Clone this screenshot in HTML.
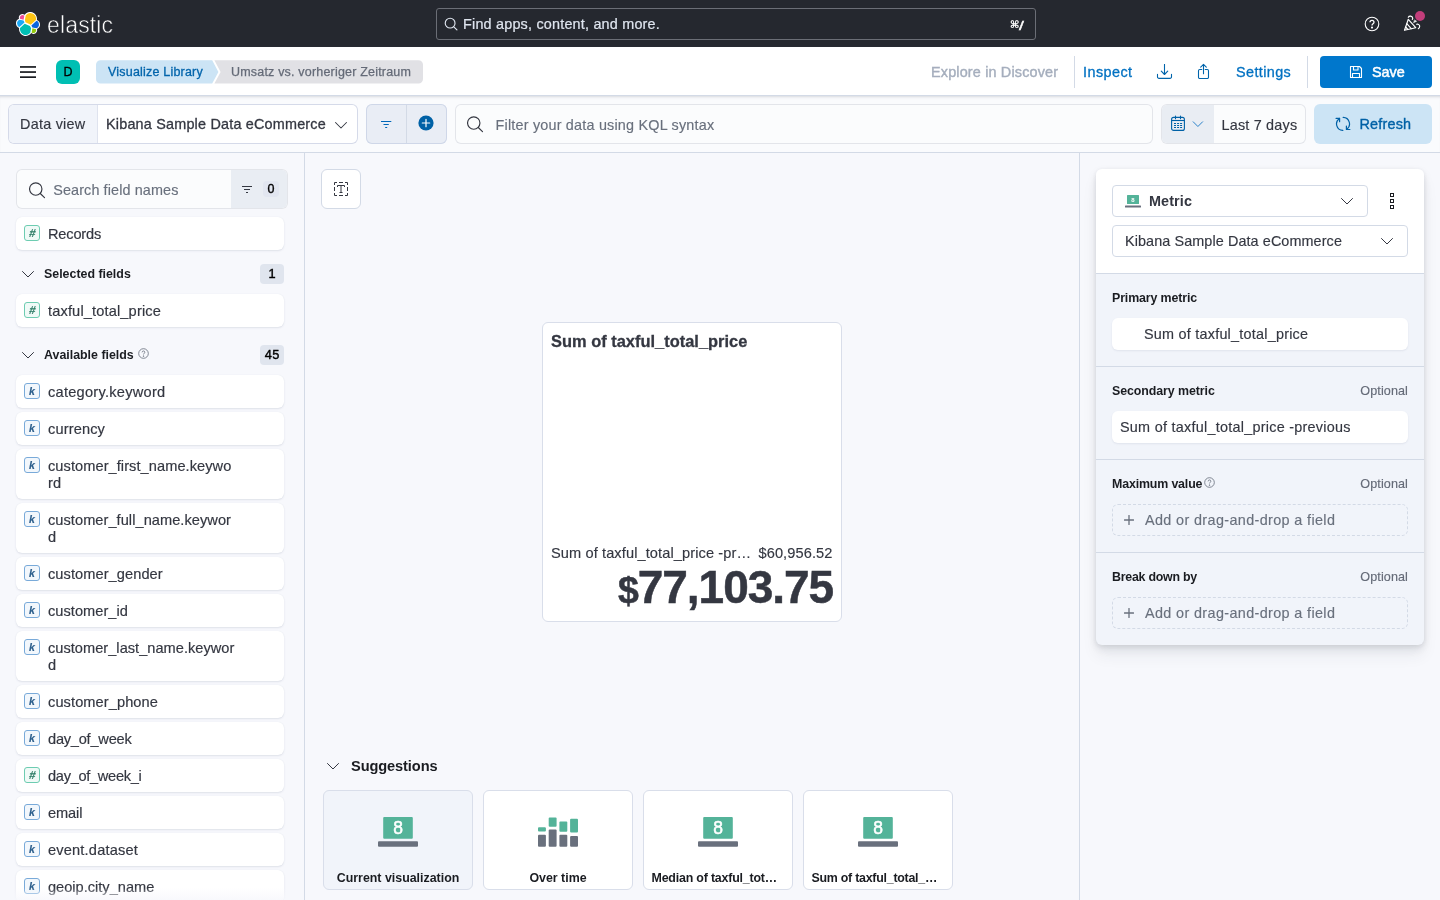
<!DOCTYPE html>
<html lang="en">
<head>
<meta charset="utf-8">
<title>Umsatz vs. vorheriger Zeitraum - Elastic</title>
<style>
*{box-sizing:border-box;margin:0;padding:0}
html,body{width:1440px;height:900px;overflow:hidden}
body{-webkit-text-stroke-width:.15px;will-change:transform;font-family:"Liberation Sans",sans-serif;font-size:14px;color:#343741;background:#f7f8fc;position:relative}
.abs{position:absolute}
.t{position:absolute;white-space:nowrap;line-height:1}
svg{display:block}
/* top dark header */
#hdr1{position:absolute;left:0;top:0;width:1440px;height:47px;background:#25282f}
#gsearch{position:absolute;left:436px;top:8px;width:600px;height:32px;border:1px solid #6b6e76;border-radius:3px;background:#25282f}
/* second header */
#hdr2{position:absolute;left:0;top:47px;width:1440px;height:49px;background:#fff;border-bottom:1px solid #d3dae6;box-shadow:0 2px 4px rgba(110,120,150,.2)}
/* query bar */
#qbar{position:absolute;left:0;top:96px;width:1440px;height:57px;background:#fafbfd;border-bottom:1px solid #d3dae6;box-shadow:inset 0 3px 3px -2px rgba(90,95,110,.22)}
.ctl{position:absolute;top:104px;height:40px;border-radius:6px;background:#fbfcfd;box-shadow:inset 0 0 0 1px #d3d9e8}
/* sidebar */
#side{position:absolute;left:0;top:153px;width:305px;height:747px;border-right:1px solid #d3dae6;background:#f7f8fc}
.fld{position:absolute;left:16px;width:268px;background:#fff;border-radius:6px;box-shadow:0 1px 2px rgba(100,110,140,.16),0 0 1px rgba(100,110,140,.1)}
.fld .n{transform:translateY(.45px);position:absolute;left:32px;top:9px;font-size:14.6px;line-height:17px;color:#343741;letter-spacing:.12px;white-space:nowrap;-webkit-text-stroke:.18px #343741}
.tok{position:absolute;left:8px;top:8px;width:16px;height:16px;border-radius:3px;background:#fff;font-weight:bold;font-style:italic;font-size:10.500px;line-height:14px;text-align:center}
.tok.h{font-size:11.500px;line-height:15px}
.tok.k{border:1px solid #79aad9;color:#2d5f8c;background:#f2f7fc}
.tok.h{border:1px solid #6dccb1;color:#2f7d67;background:#f0faf7}
.sec{position:absolute;left:44px;font-size:12.4px;font-weight:bold;color:#1a1c21;line-height:1;white-space:nowrap}
.badge{position:absolute;left:260px;width:24px;height:20px;border-radius:4px;background:#e0e5ee;font-size:12.800px;color:#000;text-align:center;line-height:20px;letter-spacing:.4px;text-indent:.4px}
/* workspace */
#work{position:absolute;left:305px;top:153px;width:775px;height:747px;border-right:1px solid #d3dae6;background:#f7f8fc}
.sg{top:790px;width:150px;height:100px;border-radius:6px;background:#fff;border:1px solid #d9deea}
.sgl{top:872px;width:150px;text-align:center;font-size:12.400px;font-weight:bold;color:#1a1c21}
/* right */
#cfg{position:absolute;left:1096px;top:169px;width:328px;height:476px;border-radius:6px;background:#f1f4fa;box-shadow:0 1px 5px rgba(40,45,60,.09),0 4px 10px rgba(40,45,60,.10),0 11px 16px rgba(40,45,60,.06);overflow:hidden}
.lbl{left:1112px;font-size:12.400px;font-weight:bold;color:#1a1c21}
.opt{right:32px;font-size:12.600px;color:#646a77;letter-spacing:.1px}
.dim{left:1112px;width:296px;height:32px;border-radius:6px;background:#fff;box-shadow:0 1px 2px rgba(100,110,140,.12)}
.emp{left:1112px;width:296px;height:32px;border-radius:6px;border:1px dashed #d3dae6}
.add{left:1145px;font-size:14.400px;color:#69707d;letter-spacing:.25px}
.lbl,.sec,.sgl,#sug,#cm{-webkit-text-stroke-width:0}
.badge{-webkit-text-stroke-width:.4px}
#mt{-webkit-text-stroke-width:.3px}
#mv{-webkit-text-stroke-width:.5px}
</style>
</head>
<body>

<!-- ===== HEADER 1 ===== -->
<div id="hdr1">
  <svg class="abs" style="left:16px;top:12px" width="24" height="24" viewBox="0 0 32 32">
    <path fill="#FFF" d="M32 16.77a6.334 6.334 0 00-1.14-3.63 6.269 6.269 0 00-3.02-2.32 9.047 9.047 0 00.16-1.71 9.052 9.052 0 00-1.76-5.38A9.044 9.044 0 0021.65.39a9.03 9.03 0 00-5.64.07 9.088 9.088 0 00-4.5 3.33 4.843 4.843 0 00-5.82-.07 4.884 4.884 0 00-1.72 2.43 4.897 4.897 0 00.05 2.98 6.39 6.39 0 00-3.04 2.33A6.402 6.402 0 000 15.23c0 1.3.4 2.58 1.15 3.64a6.29 6.29 0 003.03 2.32 9.05 9.05 0 00-.16 1.7 9.03 9.03 0 001.74 5.36 9.066 9.066 0 004.58 3.28 9.047 9.047 0 005.63-.06 9.062 9.062 0 004.51-3.32 4.83 4.83 0 005.81.06 4.873 4.873 0 001.72-2.42 4.878 4.878 0 00-.04-2.97 6.398 6.398 0 003.04-2.33A6.4 6.4 0 0032 16.77"/>
    <path fill="#FEC514" d="M12.58 13.79l7 3.2 7.07-6.2a7.74 7.74 0 00.15-1.56 7.871 7.871 0 00-1.4-4.5 7.9 7.9 0 00-3.7-2.86 7.877 7.877 0 00-4.68-.2 7.9 7.9 0 00-3.95 2.5l-1.17 6.1.68 3.52z"/>
    <path fill="#00BFB3" d="M5.33 21.22a7.929 7.929 0 001.26 6.09 7.917 7.917 0 003.73 2.88 7.9 7.9 0 004.71.18 7.915 7.915 0 003.95-2.57l1.17-6.07-1.56-2.97-7.03-3.2-6.23 5.66z"/>
    <path fill="#F04E98" d="M5.29 9.1l4.8 1.13 1.05-5.45a3.796 3.796 0 00-4.55-.06A3.804 3.804 0 005.3 9.1"/>
    <path fill="#1BA9F5" d="M4.87 10.25a5.307 5.307 0 00-2.57 1.9 5.321 5.321 0 00-.15 5.98 5.34 5.34 0 002.46 2.03l6.73-6.09-1.23-2.64-5.24-1.18z"/>
    <path fill="#93C90E" d="M20.87 27.22a3.77 3.77 0 004.53.06 3.785 3.785 0 001.3-4.37l-4.8-1.12-1.03 5.43z"/>
    <path fill="#0B64DD" d="M21.85 20.52l5.28 1.23a5.344 5.344 0 002.57-1.9 5.335 5.335 0 00.65-5.08 5.3 5.3 0 00-2.96-2.94l-6.9 6.05 1.36 2.64z"/>
  </svg>
  <div class="t" id="wordmark" style="left:47px;top:14px;font-size:23px;color:#fff;letter-spacing:.15px;-webkit-text-stroke:.55px #25282f">elastic</div>
  <div id="gsearch">
    <svg class="abs" style="left:7px;top:8px" width="14" height="14" viewBox="0 0 16 16" fill="none" stroke="#dfe5ef" stroke-width="1.3"><circle cx="7" cy="7" r="5.6"/><path d="M11.2 11.2l3.6 3.6" stroke-linecap="round"/></svg>
    <div class="t" id="gs_ph" style="left:26px;top:8px;font-size:14.4px;color:#dfe5ef;letter-spacing:.2px;-webkit-text-stroke:.2px #dfe5ef">Find apps, content, and more.</div>
    <div class="t" id="cmdk" style="left:573px;top:11px;font-size:10px;color:#fff;font-family:'DejaVu Sans','Liberation Mono',monospace;font-weight:bold">⌘</div><div class="t" id="slash" style="left:581.500px;top:9.500px;font-size:13.500px;color:#fff;font-family:'Liberation Sans',sans-serif;-webkit-text-stroke:.4px #fff;transform:scaleX(1.3);transform-origin:0 0">/</div>
  </div>
  <!-- help -->
  <svg class="abs" style="left:1364px;top:16px" width="16" height="16" viewBox="0 0 16 16" fill="none" stroke="#fff" stroke-width="1.1"><circle cx="8" cy="8" r="6.8"/><path d="M6 6.3c0-1.2.9-2 2-2s2 .8 2 1.9c0 1.5-2 1.5-2 3.2" stroke-width="1.3"/><circle cx="8" cy="11.6" r=".5" fill="#fff"/></svg>
  <!-- cheer -->
  <svg class="abs" style="left:1403px;top:15px" width="18" height="18" viewBox="0 0 18 18" fill="none" stroke="#fff" stroke-width="1.150" stroke-linejoin="round" stroke-linecap="round"><path d="M5.300 4.300L12.700 12.700 1.500 15.300z"/><path d="M3.800 8.700l4.400 5M2.700 12l2.200 2.500"/><path d="M5.300 2.300C6 .8 9.300 .6 9.700 3c.1.600-.2 1.100-.4 1.300"/><path d="M13.700 9.300c1.300-.5 3.100.7 3 2-.1 1.200-.9 2.100-1.400 2.400"/><path d="M10.700 7.700l3-1.400-2-1.300z" fill="#fff" stroke-width=".4"/></svg>
  <div class="abs" style="left:1414.800px;top:10.800px;width:10.400px;height:10.400px;border-radius:50%;background:#c23e7b"></div>
</div>

<!-- ===== HEADER 2 ===== -->
<div id="hdr2"></div>
<div id="h2c">
  <svg class="abs" style="left:20px;top:65px" width="16" height="14" viewBox="0 0 16 14" fill="#1a1c21"><rect y="1.100" width="16" height="1.700"/><rect y="6.200" width="16" height="1.700"/><rect y="11.300" width="16" height="1.700"/></svg>
  <div class="abs" style="left:56px;top:60px;width:24px;height:24px;border-radius:6px;background:#00bfb3;color:#000;font-size:12.500px;-webkit-text-stroke:.3px #000;text-align:center;line-height:24px">D</div>
  <svg class="abs" style="left:96px;top:60px" width="330" height="24" viewBox="0 0 330 24">
    <path d="M4.500 .3h111.700l6.200 11.700-6.200 11.600H4.500A4.500 4.500 0 010 19.100V4.800A4.500 4.500 0 014.500 .3z" fill="#cce4f5"/>
    <path d="M118.400 .3H322.500a4.500 4.500 0 014.500 4.500v14.300a4.500 4.500 0 01-4.500 4.500H118.400l6.200-11.600z" fill="#e1e1e5"/>
  </svg>
  <div class="t" id="bc1" style="left:108px;top:66px;font-size:12.5px;color:#0064ab;font-weight:normal;letter-spacing:.2px;-webkit-text-stroke:.3px #0064ab">Visualize Library</div>
  <div class="t" id="bc2" style="left:231px;top:66px;font-size:12.5px;color:#646a77;letter-spacing:.19px;-webkit-text-stroke:.25px #646a77">Umsatz vs. vorheriger Zeitraum</div>

  <div class="t" id="eid" style="left:931px;top:65px;font-size:14.4px;color:#a5aebd;letter-spacing:.17px;-webkit-text-stroke:.4px #a5aebd">Explore in Discover</div>
  <div class="abs" style="left:1074px;top:56px;width:1px;height:32px;background:#d3dae6"></div>
  <div class="t" id="insp" style="left:1083px;top:65px;font-size:14.4px;color:#0071c2;letter-spacing:.45px;-webkit-text-stroke:.3px #0071c2">Inspect</div>
  <svg class="abs" style="left:1156px;top:64px" width="17" height="16" viewBox="0 0 17 16" fill="none" stroke="#0064ab" stroke-width="1.100" stroke-linecap="round" stroke-linejoin="round"><path d="M8.500 .4v10M5.300 7.200l3.200 3.300 3.200-3.300"/><path d="M1.500 10.400v2.500a1.500 1.500 0 001.500 1.500h11a1.500 1.500 0 001.500-1.500v-2.500"/></svg>
  <svg class="abs" style="left:1195px;top:63px" width="17" height="17" viewBox="0 0 17 17" fill="none" stroke="#0064ab" stroke-width="1.100" stroke-linecap="round" stroke-linejoin="round"><path d="M8.500 10.800V1.500M5.700 4.200l2.800-2.800 2.800 2.800"/><path d="M6.800 6.500H4.700a1.200 1.200 0 00-1.200 1.200v6.600a1.200 1.200 0 001.200 1.200h7.600a1.200 1.200 0 001.200-1.200V7.700a1.200 1.200 0 00-1.200-1.200h-2.100"/></svg>
  <div class="t" id="sett" style="left:1236px;top:65px;font-size:14.4px;color:#0071c2;letter-spacing:.4px;-webkit-text-stroke:.3px #0071c2">Settings</div>
  <div class="abs" style="left:1307px;top:56px;width:1px;height:32px;background:#d3dae6"></div>
  <div class="abs" style="left:1320px;top:56px;width:112px;height:32px;border-radius:4px;background:#0077cc"></div>
  <svg class="abs" style="left:1349px;top:65px" width="14" height="14" viewBox="0 0 14 14" fill="none" stroke="#fff" stroke-width="1.1" stroke-linejoin="round"><path d="M1.500 1.500h9l2 2v9h-11z"/><path d="M4.500 1.500v3.500h4.500V1.500M3.500 12.500V8.500h7v4"/></svg>
  <div class="t" id="save" style="left:1372px;top:65px;font-size:14.4px;color:#fff;-webkit-text-stroke:.5px #fff">Save</div>
</div>

<!-- ===== QUERY BAR ===== -->
<div id="qbar"></div>
<div id="qc">
  <!-- data view -->
  <div class="ctl" style="left:8px;width:350px;background:#fff;box-shadow:inset 0 0 0 1px #d5dae9"></div>
  <div class="abs" style="left:9px;top:105px;width:89px;height:38px;background:#f1f4fa;border-radius:5px 0 0 5px;border-right:1px solid #dfe3ee"></div>
  <div class="t" id="dvl" style="left:20px;top:117px;font-size:14.4px;color:#343741;letter-spacing:.25px;-webkit-text-stroke:.15px #343741">Data view</div>
  <div class="t" id="dvv" style="left:106px;top:117px;font-size:14.4px;color:#343741;-webkit-text-stroke:.3px #343741;letter-spacing:.2px">Kibana Sample Data eCommerce</div>
  <svg class="abs" style="left:334.300px;top:117.500px" width="14" height="14" viewBox="0 0 14 14" fill="none" stroke="#343741" stroke-width="1.050" stroke-linecap="round" stroke-linejoin="round"><path d="M1.500 4.500L7 10l5.500-5.500"/></svg>
  <!-- filter buttons -->
  <div class="abs" style="left:366px;top:104px;width:81px;height:40px;border-radius:6px;background:#e9edf5;box-shadow:inset 0 0 0 1px #cfd7e8"></div>
  <div class="abs" style="left:406px;top:105px;width:1px;height:38px;background:#d3dae6"></div>
  <svg class="abs" style="left:379px;top:118px" width="14" height="12" viewBox="0 0 14 12" fill="none" stroke="#0067b8" stroke-width="1"><path d="M2 3.500h10.300M4.500 6.500h5.300M6.200 9.500h2"/></svg>
  <svg class="abs" style="left:418.400px;top:115.400px" width="16" height="16" viewBox="0 0 16 16"><circle cx="8" cy="8" r="7.600" fill="#0061a6"/><path d="M8 4.300v7.400M4.300 8h7.400" stroke="#fff" stroke-width="1.200" stroke-linecap="round"/></svg>
  <!-- query input -->
  <div class="ctl" style="left:455px;width:698px;box-shadow:inset 0 0 0 1px #e3e5ea"></div>
  <svg class="abs" style="left:467px;top:116px" width="18" height="18" viewBox="0 0 18 18" fill="none" stroke="#343741" stroke-width="1.150"><circle cx="6.750" cy="7" r="6.200"/><path d="M11.300 11.500l4.200 4.100" stroke-linecap="round"/></svg>
  <div class="t" id="kql" style="left:495.500px;top:118px;font-size:14.4px;color:#69707d;letter-spacing:.2px">Filter your data using KQL syntax</div>
  <!-- date picker -->
  <div class="ctl" style="left:1161px;width:145px;box-shadow:inset 0 0 0 1px #e3e5ea"></div>
  <div class="abs" style="left:1162px;top:105px;width:52px;height:38px;background:#e9edf3;border-radius:5px 0 0 5px"></div>
  <svg class="abs" style="left:1170px;top:115px" width="16" height="17" viewBox="0 0 16 17" fill="none" stroke="#0061a6" stroke-width="1.100"><rect x="1.600" y="2.400" width="12.800" height="13" rx="2"/><path d="M1.600 5.500h12.800"/><path d="M5.500 1v2.800M10.500 1v2.800" stroke-linecap="round"/><path d="M4 8.500h2M7.100 8.500h2M10.100 8.500h2M4 10.500h2M7.100 10.500h2M10.100 10.500h2M4 12.500h2M7.100 12.500h2M10.100 12.500h2" stroke-width="1"/></svg>
  <svg class="abs" style="left:1192px;top:119px" width="12" height="10" viewBox="0 0 12 10" fill="none" stroke="#2b82c9" stroke-width="1" stroke-linecap="round" stroke-linejoin="round"><path d="M1.200 2.800l4.700 4.700 4.700-4.700"/></svg>
  <div class="t" id="l7d" style="left:1221.500px;top:117.700px;font-size:14.4px;color:#343741;letter-spacing:.2px">Last 7 days</div>
  <!-- refresh -->
  <div class="abs" style="left:1314px;top:104px;width:118px;height:40px;border-radius:6px;background:#cce4f5"></div>
  <svg class="abs" style="left:1335px;top:116px" width="16" height="16" viewBox="0 0 16 16" fill="none" stroke="#0061a6" stroke-width="1.200" stroke-linecap="round" stroke-linejoin="round"><path d="M4.600 2.400A6.500 6.500 0 007.800 14.400M1.100 2.400h3.500v3.300"/><path d="M8.200 1.400A6.500 6.500 0 0111.600 13.300M11.400 10.100v3.400h3.500"/></svg>
  <div class="t" id="refr" style="left:1359.500px;top:117px;font-size:14.4px;color:#0061a6;-webkit-text-stroke:.35px #0061a6;letter-spacing:.2px">Refresh</div>
</div>

<!-- ===== SIDEBAR ===== -->
<div id="side"></div>
<div id="sidec">
  <div class="abs" style="left:16px;top:169px;width:272px;height:40px;border-radius:6px;background:#fbfcfd;box-shadow:inset 0 0 0 1px #e3e5ea"></div>
  <div class="abs" style="left:231px;top:170px;width:56px;height:38px;border-radius:0 5px 5px 0;background:#e9edf3"></div>
  <svg class="abs" style="left:29.200px;top:181.500px" width="18" height="18" viewBox="0 0 18 18" fill="none" stroke="#343741" stroke-width="1.150"><circle cx="6.750" cy="7" r="6.200"/><path d="M11.300 11.500l4.200 4.100" stroke-linecap="round"/></svg>
  <div class="t" id="sfn" style="left:53.200px;top:183px;font-size:14.4px;color:#69707d;letter-spacing:.12px">Search field names</div>
  <svg class="abs" style="left:241px;top:184px" width="12" height="10" viewBox="0 0 12 10" fill="none" stroke="#343741" stroke-width="1"><path d="M1 2.500h10M3 5.500h6M5 8.500h2"/></svg>
  <div class="abs" style="left:263px;top:181px;width:16px;height:16px;border-radius:4px;background:#e2e6f0;font-size:12.500px;-webkit-text-stroke:.35px #000;color:#000;text-align:center;line-height:16px">0</div>

  <div class="fld" style="top:217px;height:33px"><span class="tok h"><i style="display:inline-block;transform:skewX(-9deg)">#</i></span><span class="n" id="f1" style="letter-spacing:-0.192px">Records</span></div>

  <svg class="abs" style="left:21px;top:267px" width="14" height="14" viewBox="0 0 14 14" fill="none" stroke="#343741" stroke-width="1" stroke-linecap="round" stroke-linejoin="round"><path d="M1.500 4.500L7 10l5.500-5.500"/></svg>
  <div class="sec" style="top:268px">Selected fields</div>
  <div class="badge" style="top:264px">1</div>

  <div class="fld" style="top:294px;height:33px"><span class="tok h"><i style="display:inline-block;transform:skewX(-9deg)">#</i></span><span class="n" id="f2" style="letter-spacing:0.148px">taxful_total_price</span></div>

  <svg class="abs" style="left:21px;top:348px" width="14" height="14" viewBox="0 0 14 14" fill="none" stroke="#343741" stroke-width="1" stroke-linecap="round" stroke-linejoin="round"><path d="M1.500 4.500L7 10l5.500-5.500"/></svg>
  <div class="sec" style="top:349px">Available fields</div>
  <svg class="abs" style="left:137.500px;top:347.600px" width="11" height="11" viewBox="0 0 16 16" fill="none" stroke="#69707d" stroke-width="1.200"><circle cx="8" cy="8" r="7"/><path d="M6 6.300c0-1.200.900-2 2-2s2 .800 2 1.900c0 1.500-2 1.500-2 3.200"/><circle cx="8" cy="11.800" r=".500" fill="#69707d"/></svg>
  <div class="badge" style="top:345px">45</div>

  <div class="fld" style="top:375px;height:33px"><span class="tok k">k</span><span class="n" id="f3" style="letter-spacing:0.256px">category.keyword</span></div>
  <div class="fld" style="top:412px;height:33px"><span class="tok k">k</span><span class="n" id="f4" style="letter-spacing:0.129px">currency</span></div>
  <div class="fld" style="top:449px;height:50px"><span class="tok k">k</span><span class="n" id="f5" style="letter-spacing:0.069px">customer_first_name.keywo<br>rd</span></div>
  <div class="fld" style="top:503px;height:50px"><span class="tok k">k</span><span class="n" id="f6" style="letter-spacing:0.052px">customer_full_name.keywor<br>d</span></div>
  <div class="fld" style="top:557px;height:33px"><span class="tok k">k</span><span class="n" id="f7" style="letter-spacing:0.075px">customer_gender</span></div>
  <div class="fld" style="top:594px;height:33px"><span class="tok k">k</span><span class="n" id="f8" style="letter-spacing:0.045px">customer_id</span></div>
  <div class="fld" style="top:631px;height:50px"><span class="tok k">k</span><span class="n" id="f9" style="letter-spacing:0.026px">customer_last_name.keywor<br>d</span></div>
  <div class="fld" style="top:685px;height:33px"><span class="tok k">k</span><span class="n" id="f10" style="letter-spacing:0.092px">customer_phone</span></div>
  <div class="fld" style="top:722px;height:33px"><span class="tok k">k</span><span class="n" id="f11" style="letter-spacing:-0.229px">day_of_week</span></div>
  <div class="fld" style="top:759px;height:33px"><span class="tok h"><i style="display:inline-block;transform:skewX(-9deg)">#</i></span><span class="n" id="f12" style="letter-spacing:-0.298px">day_of_week_i</span></div>
  <div class="fld" style="top:796px;height:33px"><span class="tok k">k</span><span class="n" id="f13" style="letter-spacing:-0.115px">email</span></div>
  <div class="fld" style="top:833px;height:33px"><span class="tok k">k</span><span class="n" id="f14" style="letter-spacing:0.181px">event.dataset</span></div>
  <div class="fld" style="top:870px;height:33px"><span class="tok k">k</span><span class="n" id="f15" style="letter-spacing:0.001px">geoip.city_name</span></div>
  <div class="abs" style="left:0;top:888px;width:304px;height:12px;background:linear-gradient(to bottom,rgba(247,248,252,0),rgba(247,248,252,.85))"></div>
</div>

<!-- ===== WORKSPACE ===== -->
<div id="work"></div>
<div id="workc">
  <div class="abs" style="left:321px;top:169px;width:40px;height:40px;border-radius:6px;background:#fff;border:1px solid #d3dae6"></div>
  <svg class="abs" style="left:333px;top:181px" width="16" height="16" viewBox="0 0 16 16" fill="none" stroke="#343741" stroke-width="1"><path d="M1.500 4V1.500H4M6 1.500h4M12 1.500h2.500V4M14.500 6v4M14.500 12v2.500H12M10 14.500H6M4 14.500H1.500V12M1.500 10V6" stroke-linecap="butt"/><path d="M4.500 6V4.500h7V6M8 4.500v7M6.500 11.500h3" stroke-width="1"/></svg>

  <div class="abs" style="left:542px;top:322px;width:300px;height:300px;border-radius:6px;background:#fff;border:1px solid #d9deea"></div>
  <div class="t" id="mt" style="left:551px;top:333px;font-size:16.400px;font-weight:bold;color:#343741;letter-spacing:.02px">Sum of taxful_total_price</div>
  <div class="t" id="ms1" style="left:551px;top:545.700px;font-size:14.600px;color:#343741;letter-spacing:.1px">Sum of taxful_total_price -pr…</div>
  <div class="t" id="ms2" style="right:607.500px;top:545.700px;font-size:14.600px;color:#343741;letter-spacing:.1px">$60,956.52</div>
  <div class="t" id="mv" style="right:607px;top:564px;font-size:46px;font-weight:bold;color:#343741;letter-spacing:-1.050px"><span style="font-size:37.500px;letter-spacing:-1.100px">$</span>77,103.75</div>

  <svg class="abs" style="left:326px;top:759px" width="14" height="14" viewBox="0 0 14 14" fill="none" stroke="#343741" stroke-width="1" stroke-linecap="round" stroke-linejoin="round"><path d="M1.500 4.500L7 10l5.500-5.500"/></svg>
  <div class="t" id="sug" style="left:351px;top:759px;font-size:14.600px;font-weight:bold;color:#1a1c21;letter-spacing:-.1px">Suggestions</div>

  <div class="abs sg" style="left:323px;background:#f1f4fa"></div>
  <div class="abs sg" style="left:483px"></div>
  <div class="abs sg" style="left:643px"></div>
  <div class="abs sg" style="left:803px"></div>
  <svg class="abs" style="left:378px;top:816px" width="40" height="31" viewBox="0 0 40 31"><rect x="5.200" y="1" width="29.600" height="21.700" rx="1" fill="#54b399"/><rect x="0" y="25.200" width="40" height="5.500" rx="1" fill="#69707d"/><text x="20" y="18.300" text-anchor="middle" font-family="Liberation Sans, sans-serif" font-size="17.500" stroke="#fff" stroke-width=".5" fill="#fff">8</text></svg>
  <svg class="abs" style="left:538px;top:816px" width="40" height="31" viewBox="0 0 40 31"><rect x="0" y="11.200" width="7.900" height="4.200" rx="1" fill="#54b399"/><rect x="0" y="18.800" width="7.900" height="11.900" rx="1" fill="#69707d"/><rect x="10.700" y="1.600" width="7.900" height="9.200" rx="1" fill="#54b399"/><rect x="10.700" y="13.500" width="7.900" height="17.200" rx="1" fill="#69707d"/><rect x="21.400" y="5.500" width="7.900" height="10.300" rx="1" fill="#54b399"/><rect x="21.400" y="18.800" width="7.900" height="11.900" rx="1" fill="#69707d"/><rect x="32.100" y="2.700" width="7.900" height="13.800" rx="1" fill="#54b399"/><rect x="32.100" y="19.900" width="7.900" height="10.800" rx="1" fill="#69707d"/></svg>
  <svg class="abs" style="left:698px;top:816px" width="40" height="31" viewBox="0 0 40 31"><rect x="5.200" y="1" width="29.600" height="21.700" rx="1" fill="#54b399"/><rect x="0" y="25.200" width="40" height="5.500" rx="1" fill="#69707d"/><text x="20" y="18.300" text-anchor="middle" font-family="Liberation Sans, sans-serif" font-size="17.500" stroke="#fff" stroke-width=".5" fill="#fff">8</text></svg>
  <svg class="abs" style="left:858px;top:816px" width="40" height="31" viewBox="0 0 40 31"><rect x="5.200" y="1" width="29.600" height="21.700" rx="1" fill="#54b399"/><rect x="0" y="25.200" width="40" height="5.500" rx="1" fill="#69707d"/><text x="20" y="18.300" text-anchor="middle" font-family="Liberation Sans, sans-serif" font-size="17.500" stroke="#fff" stroke-width=".5" fill="#fff">8</text></svg>
  <div class="t sgl" id="sg1" style="left:323px">Current visualization</div>
  <div class="t sgl" id="sg2" style="left:483px">Over time</div>
  <div class="t sgl" id="sg3" style="left:651.500px;width:auto;text-align:left;letter-spacing:-0.187px">Median of taxful_tot…</div>
  <div class="t sgl" id="sg4" style="left:811.500px;width:auto;text-align:left;letter-spacing:-0.248px">Sum of taxful_total_…</div>
</div>

<!-- ===== RIGHT CONFIG ===== -->
<div id="cfg"></div>
<div id="cfgc">
  <div class="abs" style="left:1096px;top:169px;width:328px;height:104px;background:#fff;border-radius:6px 6px 0 0"></div>
  <div class="abs" style="left:1096px;top:273px;width:328px;height:1px;background:#d3dae6"></div>
  <div class="abs" style="left:1096px;top:366px;width:328px;height:1px;background:#d3dae6"></div>
  <div class="abs" style="left:1096px;top:459px;width:328px;height:1px;background:#d3dae6"></div>
  <div class="abs" style="left:1096px;top:552px;width:328px;height:1px;background:#d3dae6"></div>

  <div class="abs" style="left:1112px;top:185px;width:256px;height:32px;border-radius:4px;background:#fff;border:1px solid #d3dae6"></div>
  <svg class="abs" style="left:1125px;top:195px" width="16" height="13" viewBox="0 0 16 13"><rect x="2" y="0" width="12" height="9" rx=".5" fill="#54b399"/><rect x="0" y="10.500" width="16" height="2" rx=".5" fill="#69707d"/><text x="8" y="7" text-anchor="middle" font-family="Liberation Sans, sans-serif" font-size="6" font-weight="bold" fill="#fff">8</text></svg>
  <div class="t" id="cm" style="left:1149px;top:194px;font-size:14.400px;font-weight:bold;color:#343741;letter-spacing:0.102px">Metric</div>
  <svg class="abs" style="left:1340px;top:194px" width="14" height="14" viewBox="0 0 14 14" fill="none" stroke="#343741" stroke-width="1" stroke-linecap="round" stroke-linejoin="round"><path d="M1.500 4.500L7 10l5.500-5.500"/></svg>
  <svg class="abs" style="left:1389px;top:193px" width="6" height="16" viewBox="0 0 6 16" fill="none" stroke="#1a1c21" stroke-width="1"><rect x="1.500" y=".5" width="3" height="3"/><rect x="1.500" y="6.500" width="3" height="3"/><rect x="1.500" y="12.500" width="3" height="3"/></svg>

  <div class="abs" style="left:1112px;top:225px;width:296px;height:32px;border-radius:4px;background:#fff;border:1px solid #d3dae6"></div>
  <div class="t" id="cdv" style="left:1125px;top:234px;font-size:14.400px;color:#343741;letter-spacing:0.094px">Kibana Sample Data eCommerce</div>
  <svg class="abs" style="left:1380px;top:234px" width="14" height="14" viewBox="0 0 14 14" fill="none" stroke="#343741" stroke-width="1" stroke-linecap="round" stroke-linejoin="round"><path d="M1.500 4.500L7 10l5.500-5.500"/></svg>

  <div class="t lbl" id="l1" style="top:292px;letter-spacing:-0.128px">Primary metric</div>
  <div class="abs dim" style="top:318px"></div>
  <div class="t" id="d1" style="left:1144px;top:327px;font-size:14.400px;color:#343741;letter-spacing:0.236px">Sum of taxful_total_price</div>

  <div class="t lbl" id="l2" style="top:385px;letter-spacing:-0.081px">Secondary metric</div>
  <div class="t opt" style="top:385px">Optional</div>
  <div class="abs dim" style="top:411px"></div>
  <div class="t" id="d2" style="left:1120px;top:420px;font-size:14.400px;color:#343741;letter-spacing:0.261px">Sum of taxful_total_price -previous</div>

  <div class="t lbl" id="l3" style="top:478px;letter-spacing:-0.152px">Maximum value</div>
  <svg class="abs" style="left:1203.500px;top:476.800px" width="11" height="11" viewBox="0 0 16 16" fill="none" stroke="#69707d" stroke-width="1.200"><circle cx="8" cy="8" r="7"/><path d="M6 6.300c0-1.200.900-2 2-2s2 .800 2 1.900c0 1.500-2 1.500-2 3.200"/><circle cx="8" cy="11.800" r=".5" fill="#69707d"/></svg>
  <div class="t opt" style="top:478px">Optional</div>
  <div class="abs emp" style="top:504px"></div>
  <svg class="abs" style="left:1124px;top:515px" width="10" height="10" viewBox="0 0 10 10" stroke="#69707d" stroke-width="1.300" stroke-linecap="round"><path d="M5 .5v9M.5 5h9"/></svg>
  <div class="t add" id="a1" style="top:513px;letter-spacing:0.368px">Add or drag-and-drop a field</div>

  <div class="t lbl" id="l4" style="top:571px;letter-spacing:-0.242px">Break down by</div>
  <div class="t opt" style="top:571px">Optional</div>
  <div class="abs emp" style="top:597px"></div>
  <svg class="abs" style="left:1124px;top:608px" width="10" height="10" viewBox="0 0 10 10" stroke="#69707d" stroke-width="1.300" stroke-linecap="round"><path d="M5 .5v9M.5 5h9"/></svg>
  <div class="t add" id="a2" style="top:606px;letter-spacing:0.368px">Add or drag-and-drop a field</div>
</div>

</body>
</html>
